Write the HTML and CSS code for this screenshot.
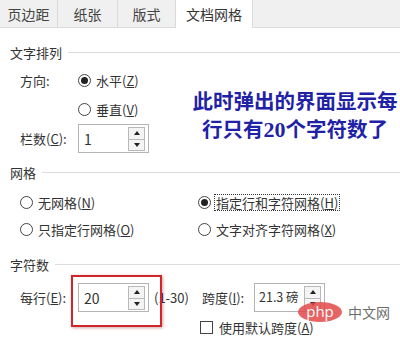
FILE: index.html
```html
<!DOCTYPE html>
<html lang="zh-CN">
<head>
  <meta charset="UTF-8">
  <title>文档网格</title>
  <link rel="stylesheet" href="styles.css">
</head>
<body>
  <div class="dialog">
    <ul class="tabs">
      <li class="tab t1">页边距</li>
      <li class="tab t2">纸张</li>
      <li class="tab t3">版式</li>
      <li class="tab t4 active">文档网格</li>
      <li class="tab-rest"></li>
    </ul>

    <div class="panel">
      <div class="group-title"><span>文字排列</span></div>
      <div class="row">
        <span class="label">方向:</span>
        <span class="radio checked"></span><span>水平(<u>Z</u>)</span>
      </div>
      <div class="row">
        <span class="label"></span>
        <span class="radio"></span><span>垂直(<u>V</u>)</span>
      </div>
      <div class="row">
        <span class="label">栏数(<u>C</u>):</span>
        <div class="spin">
          <span class="spin-val">1</span>
          <div class="spin-btns"><b class="up"></b><b class="down"></b></div>
        </div>
      </div>

      <div class="group-title g2"><span>网格</span></div>
      <div class="grid-opts">
        <div class="opt"><span class="radio"></span><span>无网格(<u>N</u>)</span></div>
        <div class="opt"><span class="radio checked"></span><span class="focus">指定行和字符网格(<u>H</u>)</span></div>
        <div class="opt"><span class="radio"></span><span>只指定行网格(<u>O</u>)</span></div>
        <div class="opt"><span class="radio"></span><span>文字对齐字符网格(<u>X</u>)</span></div>
      </div>

      <div class="group-title g3"><span>字符数</span></div>
      <div class="row chars">
        <span class="label">每行(<u>E</u>):</span>
        <div class="spin marked">
          <span class="spin-val">20</span>
          <div class="spin-btns"><b class="up"></b><b class="down"></b></div>
        </div>
        <span class="range">(1-30)</span>
        <span class="pitch-label">跨度(<u>I</u>):</span>
        <div class="spin">
          <span class="spin-val small">21.3 磅</span>
          <div class="spin-btns"><b class="up"></b><b class="down"></b></div>
        </div>
      </div>
      <div class="row check-row">
        <span class="checkbox"></span><span>使用默认跨度(<u>A</u>)</span>
      </div>
    </div>

    <div class="note">此时弹出的界面显示每<br>行只有<span class="num">20</span>个字符数了</div>
    <div class="watermark"><span class="php">php</span><span class="cn">中文网</span></div>
  </div>
</body>
</html>
```

FILE: styles.css
```css
*{margin:0;padding:0;box-sizing:border-box;}
html,body{width:100%;height:100%;overflow:hidden;background:#fff;}
body{font:13px/1 "Noto Sans CJK SC","Microsoft YaHei",sans-serif;color:#333;}
u{text-decoration:underline;text-underline-offset:1px;}

.dialog{position:relative;width:400px;height:344px;}

.tabs{display:flex;height:28px;list-style:none;}
.tab{display:flex;align-items:center;justify-content:center;background:#f0f0f0;border-right:1px solid #dadada;border-bottom:1px solid #dadada;color:#444;font-size:14px;}
.t1{width:58px;}
.t2{width:60px;}
.t3{width:58px;}
.t4{width:77px;}
.tab.active{background:#fff;border-bottom-color:#fff;color:#333;}
.tab-rest{flex:1;background:#f0f0f0;border-bottom:1px solid #dadada;}

.panel{padding:14px 0 0 10px;}
.group-title{display:flex;align-items:center;height:20px;gap:6px;}
.group-title::after{content:"";flex:1;height:1px;background:#dcdcdc;}
.g2{margin-top:9px;}
.g3{margin-top:11px;}

.row{display:flex;align-items:center;height:29px;padding-left:10px;white-space:nowrap;}
.row > *{flex-shrink:0;}
.group-title + .row{margin-top:4px;}
.group-title + .chars{margin-top:9px;}
.label{width:58px;}
.radio{width:13px;height:13px;border:1px solid #444;border-radius:50%;margin-right:5px;display:flex;align-items:center;justify-content:center;background:#fff;flex-shrink:0;}
.radio.checked::after{content:"";width:7px;height:7px;border-radius:50%;background:#222;}

.spin{width:71px;height:29px;border:1px solid #b4b4b4;display:flex;align-items:center;justify-content:space-between;padding:0 3px 0 5px;background:#fff;}
.spin-val{font-size:14px;color:#333;white-space:nowrap;}
.spin-val.small{font-size:12.5px;margin-left:-1px;}
.spin-btns{display:flex;flex-direction:column;border:1px solid #b9b9b9;flex-shrink:0;}
.spin-btns b{width:15px;height:11px;display:flex;align-items:center;justify-content:center;background:#f4f4f4;}
.spin-btns b + b{border-top:1px solid #b9b9b9;}
.spin-btns .up::after{content:"";border:3px solid transparent;border-bottom:4px solid #222;border-top:0;}
.spin-btns .down::after{content:"";border:3px solid transparent;border-top:4px solid #222;border-bottom:0;}

.grid-opts{display:grid;grid-template-columns:178px 1fr;margin-top:7px;padding-left:10px;}
.opt{display:flex;align-items:center;height:27px;}
.focus{outline:1px dotted #333;outline-offset:1px;}

.marked{position:relative;}
.marked::before{content:"";position:absolute;left:-8px;top:-9px;width:87px;height:48px;border:2px solid #d0262b;box-shadow:1px 1px 3px rgba(120,0,0,.35);}
.range{margin-left:5px;width:48px;}
.pitch-label{width:52px;}
.check-row{height:24px;padding-left:190px;margin-top:3px;}
.checkbox{width:13px;height:13px;border:1px solid #444;margin-right:6px;background:#fff;}

.note{position:absolute;left:186px;top:86px;width:218px;text-align:center;font:bold 20.5px/28px "Noto Sans CJK SC",serif;color:#1f22a6;}
.note .num{font-family:"Liberation Serif",serif;font-size:22px;}

.watermark{position:absolute;left:298px;top:302px;display:flex;align-items:center;gap:6px;opacity:.85;}
.php{width:44px;height:20px;border-radius:50%;background:#e34a4a;color:#fff;font:15px/19px "Open Sans",sans-serif;text-align:center;}
.cn{font-size:14px;line-height:18px;color:#555;}
```
